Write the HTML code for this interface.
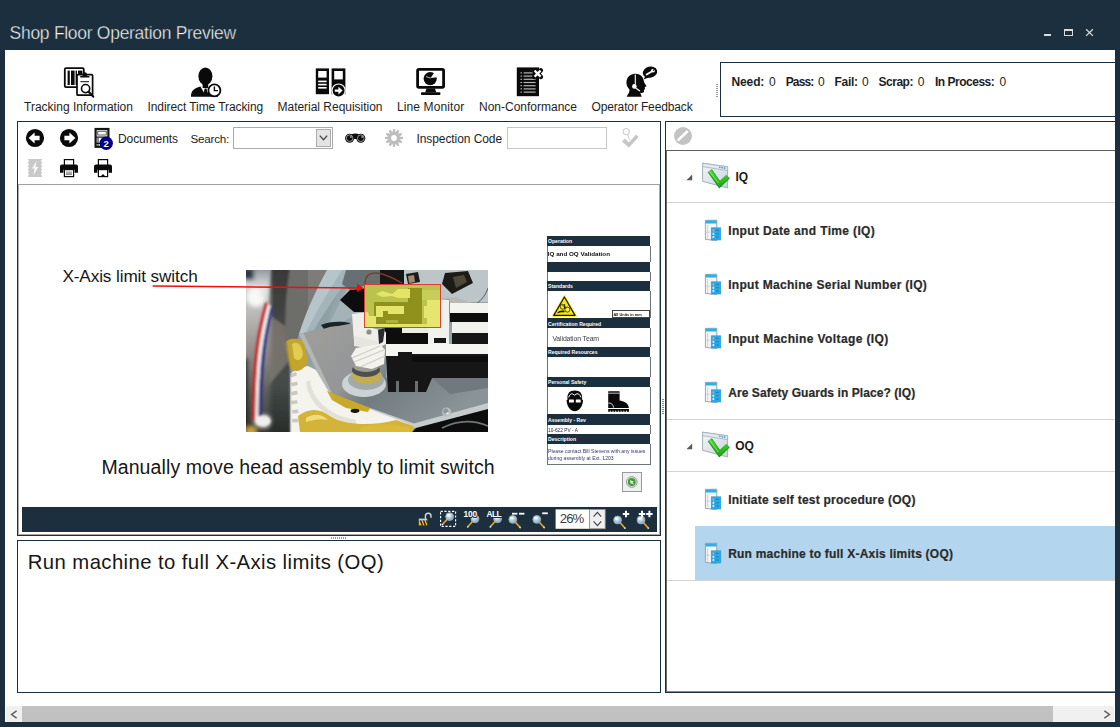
<!DOCTYPE html>
<html><head><meta charset="utf-8"><title>Shop Floor Operation Preview</title>
<style>
*{box-sizing:border-box;margin:0;padding:0}
html,body{width:1120px;height:727px;overflow:hidden;background:#1b2f3e;font-family:"Liberation Sans",sans-serif;color:#1e1e1e}
.a{position:absolute}
.t{position:absolute;white-space:nowrap;line-height:1}
#win{position:absolute;left:5px;top:50px;width:1110px;height:672px;background:#fff;overflow:hidden}
/* coordinates inside #page are page-absolute */
#page{position:absolute;left:0;top:0;width:1120px;height:727px;overflow:hidden}
.navy{background:#1b2f3e}
.lbl{font-size:12px;color:#1e1e1e}
.b{font-weight:700}
</style></head><body>
<div id="page">
<div id="win"></div>
<!-- TITLEBAR -->
<div class="t" style="left:9.6px;top:24.6px;font-size:17.5px;color:#f4f6f8;letter-spacing:-0.29px;-webkit-text-stroke:0.36px #1b2f3e">Shop Floor Operation Preview</div>
<div class="a" style="left:1044px;top:34px;width:7px;height:2px;background:#dcdcdc"></div>
<div class="a" style="left:1064px;top:29px;width:9px;height:7px;border:1px solid #dcdcdc;border-top-width:2px"></div>
<svg class="a" style="left:1085px;top:29px" width="9" height="8" viewBox="0 0 9 8"><path d="M1.1 0.2 L7.9 6.9 M7.9 0.2 L1.1 6.9" stroke="#dcdcdc" stroke-width="1.25" fill="none"/></svg>
<!--TOPTOOLBAR-->
<!-- Tracking Information icon -->
<svg class="a" style="left:62px;top:65px" width="36" height="36" viewBox="62 65 36 36">
 <rect x="64.8" y="68.2" width="19" height="19" rx="1.2" fill="#fff" stroke="#0a0a0a" stroke-width="1.8"/>
 <rect x="67.6" y="70.6" width="2.2" height="14.4" fill="#0a0a0a"/><rect x="71" y="70.6" width="3.6" height="14.4" fill="#0a0a0a"/><rect x="75.6" y="70.6" width="1.4" height="14.4" fill="#0a0a0a"/><rect x="78" y="70.6" width="4.4" height="14.4" fill="#0a0a0a"/>
 <rect x="77" y="74.6" width="15.6" height="20.6" rx="1" fill="#fff" stroke="#0a0a0a" stroke-width="1.7"/>
 <path d="M80.2 77.6 h9.2 v-1.6 h-2.4 v-1.6 a2.2 2.2 0 0 0 -4.4 0 v1.6 h-2.4z" fill="#0a0a0a"/>
 <rect x="80.4" y="81.2" width="8.6" height="1" fill="#0a0a0a"/>
 <circle cx="85.6" cy="88.6" r="4.1" fill="#fff" stroke="#0a0a0a" stroke-width="1.6"/>
 <path d="M88.6 91.8 L93.2 96.6" stroke="#0a0a0a" stroke-width="2.2" stroke-linecap="round"/>
</svg>
<div class="t lbl" style="left:24px;top:100.5px;letter-spacing:0px">Tracking Information</div>
<!-- Indirect Time Tracking -->
<svg class="a" style="left:188px;top:65px" width="36" height="36" viewBox="188 65 36 36">
 <ellipse cx="205.4" cy="76.2" rx="7" ry="8.8" fill="#0a0a0a"/><rect x="202.6" y="82" width="5.6" height="6" fill="#0a0a0a"/>
 <path d="M191 96.8 C191 90 194 88.6 200.4 86.4 L205.6 95.4 L210.8 86.4 C214 87.4 216 88 218 89.6 L218 96.8 Z" fill="#0a0a0a"/>
 <path d="M204.6 88.4 h2 l0.9 5 l-1.9 3.2 l-1.9 -3.2z" fill="#0a0a0a"/>
 <circle cx="214.4" cy="90.4" r="6" fill="#fff" stroke="#0a0a0a" stroke-width="1.8"/>
 <path d="M214.4 86.4 V90.6 H218" stroke="#0a0a0a" stroke-width="1.4" fill="none"/>
</svg>
<div class="t lbl" style="left:147.5px;top:100.5px;letter-spacing:-0.08px">Indirect Time Tracking</div>
<!-- Material Requisition -->
<svg class="a" style="left:313px;top:65px" width="36" height="36" viewBox="313 65 36 36">
 <rect x="315.8" y="68.4" width="13.2" height="25.8" fill="#0a0a0a"/>
 <rect x="331.6" y="68.4" width="13.8" height="25.8" fill="#0a0a0a"/>
 <rect x="318.2" y="71" width="8.4" height="6.6" fill="#fff"/>
 <rect x="334.2" y="71" width="8.6" height="8.4" fill="#fff"/>
 <rect x="318.2" y="80.6" width="8.4" height="1.6" fill="#fff"/><rect x="318.2" y="83.8" width="8.4" height="1.6" fill="#fff"/><rect x="318.2" y="87" width="8.4" height="1.6" fill="#fff"/>
 <circle cx="338.6" cy="90.6" r="6.6" fill="#0a0a0a" stroke="#fff" stroke-width="1.2"/>
 <path d="M334.8 89.4 h3.6 v-2.6 l4.2 3.8 l-4.2 3.8 v-2.6 h-3.6z" fill="#fff"/>
</svg>
<div class="t lbl" style="left:277.5px;top:100.5px;letter-spacing:-0.02px">Material Requisition</div>
<!-- Line Monitor -->
<svg class="a" style="left:412px;top:65px" width="36" height="36" viewBox="412 65 36 36">
 <rect x="417.6" y="69.4" width="26" height="18" rx="1.4" fill="#fff" stroke="#0a0a0a" stroke-width="2.8"/>
 <path d="M426.4 88.6 h8.6 l1.2 4 h-11z" fill="#0a0a0a"/>
 <rect x="421" y="92.2" width="19.4" height="2.8" rx="0.8" fill="#0a0a0a"/>
 <circle cx="430.2" cy="78.6" r="6.6" fill="#0a0a0a"/>
 <path d="M430.6 78 L434.4 72.6 A7 7 0 0 1 437.2 77.2 Z" fill="#fff"/>
 <path d="M426 76.6 L430.6 78" stroke="#fff" stroke-width="0.7"/>
</svg>
<div class="t lbl" style="left:397px;top:100.5px;letter-spacing:0.12px">Line Monitor</div>
<!-- Non-Conformance -->
<svg class="a" style="left:512px;top:63px" width="36" height="36" viewBox="512 63 36 36">
 <rect x="516.8" y="67.4" width="22.2" height="28.8" fill="#0a0a0a"/>
 <g fill="#b4b4b4"><rect x="523.6" y="72.3" width="9" height="1.2"/><rect x="523.6" y="75.5" width="9" height="1.2"/><rect x="523.6" y="78.7" width="12" height="1.2"/><rect x="523.6" y="81.9" width="12" height="1.2"/><rect x="523.6" y="85.1" width="12" height="1.2"/><rect x="523.6" y="88.3" width="12" height="1.2"/><rect x="523.6" y="91.5" width="12" height="1.2"/></g>
 <g fill="#fff"><rect x="520.6" y="72.4" width="1.2" height="1"/><rect x="520.6" y="75.6" width="1.2" height="1"/><rect x="520.6" y="78.8" width="1.2" height="1"/><rect x="520.6" y="82" width="1.2" height="1"/><rect x="520.6" y="85.2" width="1.2" height="1"/><rect x="520.6" y="88.4" width="1.2" height="1"/><rect x="520.6" y="91.6" width="1.2" height="1"/></g>
 <path d="M534.4 70.4 L540.8 76.8 M540.8 70.4 L534.4 76.8" stroke="#0a0a0a" stroke-width="4.6" stroke-linecap="round"/>
 <path d="M534.6 70.6 L540.6 76.6 M540.6 70.6 L534.6 76.6" stroke="#fff" stroke-width="2.2" stroke-linecap="butt"/>
</svg>
<div class="t lbl" style="left:479px;top:100.5px;letter-spacing:0px">Non-Conformance</div>
<!-- Operator Feedback -->
<svg class="a" style="left:622px;top:63px" width="38" height="38" viewBox="622 63 38 38">
 <path d="M626.6 96.8 C628.4 93.4 630 91.6 629.4 89.4 C625.4 85.8 625.4 78.6 629.8 75.6 C634.2 72.6 640.6 73.6 642.8 77.8 C643.8 79.8 643.8 81.4 644.2 82.6 L646.6 86.2 L644.8 87 L645 89.2 L643.8 90 L644 91.6 C643.8 93 642 93.2 640.2 92.8 L641.8 96.8 Z" fill="#0a0a0a"/>
 <path d="M635.3 74.6 V84.6" stroke="#fff" stroke-width="1.1"/>
 <circle cx="634.4" cy="86.4" r="2.3" fill="#fff"/>
 <path d="M635.6 88 L640 91" stroke="#fff" stroke-width="1.1"/>
 <ellipse cx="650" cy="72.2" rx="7.3" ry="5.5" fill="#0a0a0a" transform="rotate(-14 650 72.2)"/>
 <path d="M643.6 79.6 L645.6 75.4 L648.8 77.4 Z" fill="#0a0a0a"/>
 <path d="M646.6 74.6 L652.2 71.2" stroke="#fff" stroke-width="1.7" stroke-linecap="round"/>
 <circle cx="653" cy="70.6" r="1.9" fill="#fff"/><path d="M653 70.6 L655.6 68.6" stroke="#0a0a0a" stroke-width="1.3"/>
</svg>
<div class="t lbl" style="left:591.5px;top:100.5px;letter-spacing:-0.14px">Operator Feedback</div>
<!-- splitter grip -->
<div class="a" style="left:716px;top:83px;width:2px;height:15px;background:repeating-linear-gradient(#fff 0 1px,#9a9a9a 1px 2px)"></div>
<!-- Stats box -->
<div class="a" style="left:720px;top:62px;width:410px;height:55px;border:1px solid #1b2f3e;background:#fff"></div>
<div class="t b" style="left:731.4px;top:75.5px;font-size:12px;letter-spacing:-0.09px">Need:</div><div class="t" style="left:769.1px;top:75.5px;font-size:12px;letter-spacing:0px">0</div><div class="t b" style="left:785.7px;top:75.5px;font-size:12px;letter-spacing:-0.87px">Pass:</div><div class="t" style="left:818px;top:75.5px;font-size:12px;letter-spacing:0px">0</div><div class="t b" style="left:834.6px;top:75.5px;font-size:12px;letter-spacing:-0.31px">Fail:</div><div class="t" style="left:862px;top:75.5px;font-size:12px;letter-spacing:0px">0</div><div class="t b" style="left:878.6px;top:75.5px;font-size:12px;letter-spacing:-0.51px">Scrap:</div><div class="t" style="left:917.7px;top:75.5px;font-size:12px;letter-spacing:0px">0</div><div class="t b" style="left:934.9px;top:75.5px;font-size:12px;letter-spacing:-0.48px">In Process:</div><div class="t" style="left:999.4px;top:75.5px;font-size:12px;letter-spacing:0px">0</div>
<!--/TOPTOOLBAR-->
<!--STATS-->
<!--LEFTPANEL-->
<!-- left panel frame -->
<div class="a" style="left:17px;top:121px;width:644px;height:415px;border:1px solid #1b2f3e;background:#fff"></div>
<div class="a" style="left:18px;top:184px;width:642px;height:351px;border:1px solid #a9a9a9;border-top-color:#a0a0a0;background:#fff"></div>
<!-- back / forward -->
<svg class="a" style="left:25px;top:128px" width="20" height="20" viewBox="0 0 20 20"><circle cx="10" cy="10" r="9.1" fill="#0a0a0a"/><path d="M3.6 10 L9.6 4.6 V7.8 H14.6 V12.2 H9.6 V15.4 Z" fill="#fff"/></svg>
<svg class="a" style="left:59px;top:128px" width="20" height="20" viewBox="0 0 20 20"><circle cx="10" cy="10" r="9.1" fill="#0a0a0a"/><path d="M16.4 10 L10.4 4.6 V7.8 H5.4 V12.2 H10.4 V15.4 Z" fill="#fff"/></svg>
<!-- documents icon -->
<svg class="a" style="left:93px;top:126px" width="24" height="26" viewBox="93 126 24 26">
 <rect x="95.6" y="129" width="12.8" height="17.8" fill="#fff" stroke="#141414" stroke-width="2.2"/>
 <rect x="97.8" y="131.2" width="8.4" height="3.8" fill="#fff" stroke="#141414" stroke-width="0.7"/>
 <path d="M96 137.2 H108 M96 143.4 H102" stroke="#141414" stroke-width="1.2"/>
 <path d="M98 138 V146" stroke="#141414" stroke-width="1"/>
 <circle cx="106.2" cy="143.3" r="6.7" fill="#00008b"/>
</svg>
<div class="t b" style="left:103.4px;top:138.8px;font-size:9.5px;color:#fff">2</div>
<div class="t lbl" style="left:118px;top:132.6px;letter-spacing:-0.08px">Documents</div>
<div class="t lbl" style="left:190.4px;top:133.3px;letter-spacing:-0.22px;font-size:11.7px">Search:</div>
<!-- combo -->
<div class="a" style="left:233px;top:127px;width:100px;height:22px;border:1px solid #ababab;background:#fff"></div>
<div class="a" style="left:316px;top:129px;width:15px;height:18px;border:1px solid #adadad;background:#e4e4e4"></div>
<svg class="a" style="left:318px;top:133px" width="11" height="10" viewBox="0 0 11 10"><path d="M1.8 2.6 L5.5 6.8 L9.2 2.6" stroke="#444" stroke-width="1.3" fill="none"/></svg>
<!-- binoculars -->
<svg class="a" style="left:344px;top:131px" width="23" height="14" viewBox="344 131 23 14">
 <path d="M351 134.4 Q355.2 132.6 359.4 134.4 L359.4 139 H351Z" fill="#0c0c0c"/>
 <circle cx="349.6" cy="138.2" r="4.5" fill="#0c0c0c"/><circle cx="360.8" cy="138.2" r="4.5" fill="#0c0c0c"/>
 <circle cx="349.6" cy="138.2" r="3.3" fill="none" stroke="#fff" stroke-width="0.55"/><circle cx="360.8" cy="138.2" r="3.3" fill="none" stroke="#fff" stroke-width="0.55"/>
 <circle cx="350.9" cy="137" r="0.8" fill="#fff"/><circle cx="362.1" cy="137" r="0.8" fill="#fff"/>
</svg>
<!-- gear (disabled) -->
<svg class="a" style="left:384.1px;top:128.1px" width="20" height="20" viewBox="-10 -10 20 20">
 <g fill="#bdbdbd"><circle r="5.9"/>
 <g id="gt"><path d="M-0.9 -9 h1.8 l.7 4 h-3.2z M-0.9 9 h1.8 l.7 -4 h-3.2z"/></g>
 <use href="#gt" transform="rotate(30)"/><use href="#gt" transform="rotate(60)"/><use href="#gt" transform="rotate(90)"/><use href="#gt" transform="rotate(120)"/><use href="#gt" transform="rotate(150)"/></g>
 <circle r="2.9" fill="#fff"/>
</svg>
<div class="t lbl" style="left:416.4px;top:132.6px;letter-spacing:-0.07px">Inspection Code</div>
<div class="a" style="left:507px;top:127px;width:100px;height:22px;border:1px solid #c6c6c6;background:#fff"></div>
<!-- check/key disabled icon -->
<svg class="a" style="left:620px;top:126px" width="22" height="24" viewBox="620 126 22 24">
 <circle cx="626.2" cy="131.6" r="3.1" fill="#fff" stroke="#cdcdcd" stroke-width="1.1"/>
 <path d="M627.6 134.6 L629.6 139.6" stroke="#cdcdcd" stroke-width="1"/>
 <path d="M622 141.4 L624.7 138.5 L628.9 142.4 L636 134.4 L638.7 137 L628.9 147.5 Z" fill="#c6c6c6"/>
</svg>
<!-- row 2: flash (disabled), printers -->
<svg class="a" style="left:26px;top:157px" width="18" height="22" viewBox="26 157 18 22">
 <rect x="28" y="159" width="14" height="18" fill="#c9c9c9"/>
 <g fill="#fff"><circle cx="28" cy="161" r="1"/><circle cx="28" cy="164.4" r="1"/><circle cx="28" cy="167.8" r="1"/><circle cx="28" cy="171.2" r="1"/><circle cx="28" cy="174.6" r="1"/>
 <circle cx="42" cy="161" r="1"/><circle cx="42" cy="164.4" r="1"/><circle cx="42" cy="167.8" r="1"/><circle cx="42" cy="171.2" r="1"/><circle cx="42" cy="174.6" r="1"/></g>
 <path d="M36.6 161 L32 168.4 H34.8 L33.4 175.2 L38.2 167 H35.4 Z" fill="#fff"/>
</svg>
<svg class="a" style="left:59px;top:157px" width="20" height="21" viewBox="0 0 20 21">
 <rect x="5.4" y="2.6" width="9.2" height="6" fill="#fff" stroke="#0a0a0a" stroke-width="1.2"/>
 <path d="M1 9.4 a2 2 0 0 1 2 -2 h14 a2 2 0 0 1 2 2 v6.4 h-3.4 v-3 h-11.2 v3 h-3.4z" fill="#0a0a0a"/>
 <rect x="5.4" y="12.6" width="9.2" height="7" fill="#fff" stroke="#0a0a0a" stroke-width="1.2"/>
 <rect x="7" y="14.6" width="6" height="3.4" fill="#8a8a8a"/><rect x="7" y="15.6" width="6" height="0.8" fill="#e0e0e0"/>
</svg>
<svg class="a" style="left:93px;top:157px" width="20" height="21" viewBox="0 0 20 21">
 <rect x="5.4" y="2.6" width="9.2" height="6" fill="#fff" stroke="#0a0a0a" stroke-width="1.2"/>
 <path d="M1 9.4 a2 2 0 0 1 2 -2 h14 a2 2 0 0 1 2 2 v6.4 h-3.4 v-3 h-11.2 v3 h-3.4z" fill="#0a0a0a"/>
 <rect x="5.4" y="12.6" width="9.2" height="7" fill="#fff" stroke="#0a0a0a" stroke-width="1.2"/>
 <path d="M8 19 l2 -2 l2 2z" fill="#0a0a0a"/>
</svg>
<!--SLIDE-->
<div class="t" style="left:62.4px;top:268px;font-size:17.2px;letter-spacing:-0.12px;color:#161616">X-Axis limit switch</div>
<div class="t" style="left:101.4px;top:458.4px;font-size:19.5px;letter-spacing:0.1px;color:#161616">Manually move head assembly to limit switch</div>
<!--PHOTO-->
<svg class="a" style="left:246px;top:270px" width="242" height="162" viewBox="0 0 242 162">
<defs>
 <filter id="b1" x="-5%" y="-5%" width="110%" height="110%"><feGaussianBlur stdDeviation="0.75"/></filter>
 <filter id="b2" x="-30%" y="-30%" width="160%" height="160%"><feGaussianBlur stdDeviation="2"/></filter>
 <filter id="b3" x="-20%" y="-20%" width="140%" height="140%"><feGaussianBlur stdDeviation="1.3"/></filter>
 <linearGradient id="pl" x1="0" y1="0" x2="1" y2=".6"><stop offset="0" stop-color="#a09f9c"/><stop offset=".45" stop-color="#939597"/><stop offset=".6" stop-color="#727b7f"/><stop offset="1" stop-color="#8a9397"/></linearGradient>
 <linearGradient id="lf" x1="0" y1="0" x2="0" y2="1"><stop offset="0" stop-color="#7c838a"/><stop offset=".12" stop-color="#d4d6d6"/><stop offset=".32" stop-color="#b4b2b0"/><stop offset=".55" stop-color="#8a8480"/><stop offset=".75" stop-color="#5a5b57"/><stop offset="1" stop-color="#35382f"/></linearGradient>
 <linearGradient id="dk" x1="0" y1="0" x2="0" y2="1"><stop offset="0" stop-color="#383838"/><stop offset=".45" stop-color="#4a4a48"/><stop offset=".7" stop-color="#454b48"/><stop offset="1" stop-color="#262a28"/></linearGradient>
 <clipPath id="pc"><rect width="242" height="162"/></clipPath>
</defs>
<g clip-path="url(#pc)">
<rect width="242" height="162" fill="#8fa0a5"/>
<g filter="url(#b1)">
 <!-- ring interior bluish -->
 <path d="M100 0 H242 V110 H60 Z" fill="#93a5aa"/>
 <path d="M110 0 H160 L120 40 L80 60Z" fill="#a3b3b7"/>
 <!-- disc (mid grey) -->
 <path d="M30 0 H84 C72 20 62 42 53 64 L40 110 H30Z" fill="#6d6d6b"/>
 <path d="M62 0 H84 C76 14 68 28 62 44 C62 30 62 14 62 0Z" fill="#7b7b79"/>
 <!-- silver ring outer -->
 <path d="M81 0 H102 C88 20 74 42 62 62 L53 64 C60 42 70 20 81 0Z" fill="#b6c5c9"/>
 <path d="M96 0 H108 C94 20 78 42 68 60 L60 62 C70 42 82 22 96 0Z" fill="#a3b5ba"/>
 <!-- top right light area -->
 <path d="M146 0 H242 V32 H196 L150 16Z" fill="#bcc6c8"/>
 <path d="M199 3 L222 1 L227 13 L206 24 L196 14Z" fill="#1e1c18"/>
 <path d="M207 7 L218 5 L221 12 L210 18Z" fill="#4e4a38"/>
 <!-- top black block behind switch -->
 <path d="M134 0 H158 V14 H134Z" fill="#141414"/>
 <path d="M160 4 L172 2 L174 12 L162 14Z" fill="#1a1a1a"/>
 <path d="M162 6 L168 5 L169 12 L163 13Z" fill="#a88a68"/>
 <!-- dark cutouts in ring -->
 <path d="M100 0 H134 V16 H118 L104 20 L96 14Z" fill="#667072"/><path d="M94 30 L104 20 L118 18.6 L121 33 L121 42 L108 42Z" fill="#0b0b0b"/>
 <path d="M75 55 C84 51 96 51 104 53 L104 57 C96 55 84 56 78 59Z" fill="#1c2426"/>
 <!-- brown wire -->
 <path d="M119 16 C118 4 126 1 136 4 C144 6 150 10 156 13" stroke="#7a3e26" stroke-width="1.5" fill="none"/>
 <!-- switch body (under highlight) -->
 <rect x="118" y="14" width="77" height="44" fill="#8b9a9a"/>
 <path d="M128 32 H176 V54 H128Z" fill="#1b1b1b"/>
 <path d="M162 18 H176 V34 H162Z" fill="#1b1b1b"/>
 <path d="M176 20 H194 V30 H176Z" fill="#a9b4b4"/>
 <path d="M130 36 H158 V44 H142 V41 H137 V47 H130Z" fill="#efefe8"/>
 <path d="M178 36 H194 V48 H178Z" fill="#f2f2ea"/>
 <path d="M190 30 H195 V58 H190Z" fill="#f4f4ee"/>
 <path d="M118 46 H130 V58 H118Z" fill="#f0f0ea"/>
 <path d="M130 54 H195 V58 H130Z" fill="#ecece4"/>
 <path d="M130 24 L136 21 L146 24 L152 19 H164 V28 H152 L146 26 L136 27Z" fill="#eeeedc"/>
 <path d="M140 50 H152 V53 H140Z" fill="#6b6b6b"/>
 <!-- spring contact right of highlight -->
 <path d="M196 28 L210 27 L226 33 L230 38 L224 38 L210 34 L198 36Z" fill="#b9b9b3"/>
 <path d="M199 30 L203 29 L212 68 L209 69Z" fill="#8c8c86"/>
 <path d="M230 34 C236 30 240 24 242 18" stroke="#3a4450" stroke-width="0.8" fill="none"/>
 <!-- white/black rails right -->
 <rect x="204" y="33" width="38" height="10" fill="#f3f3ef"/>
 <rect x="204" y="43" width="38" height="9" fill="#101010"/>
 <rect x="206" y="52" width="36" height="11" fill="#f1f1ed"/>
 <rect x="206" y="63" width="36" height="11" fill="#121212"/>
 <rect x="181" y="30" width="22" height="46" fill="#f1f1ed"/>
 <rect x="156" y="58" width="26" height="5" fill="#ecece6"/>
 <rect x="139" y="58" width="17" height="17" fill="#111"/><rect x="156" y="63" width="26" height="12" fill="#111"/>
 <rect x="188" y="68" width="12" height="5" fill="#151515"/>
 <!-- metal plate -->
 <path d="M52.8 63.8 L104 53.8 L140 70 L140 108 L242 108 V133 L168 153.6 L124 138 L81.5 122.5 Z" fill="url(#pl)"/>
 <path d="M186 108 H242 V118 L204 124 Z" fill="#6f797d"/>
 <path d="M124 138 L168 153.6 L242 133 V139.4 L170 158 L122 141Z" fill="#c6cccd"/>
 <path d="M52.8 63.8 L57.4 63 L86 123 L81.5 122.5Z" fill="#b4b6b5"/>
 <circle cx="200.6" cy="142" r="4.6" fill="#b7bec0"/><circle cx="199.8" cy="141" r="2.6" fill="#8e979a"/><circle cx="201.6" cy="143.4" r="1.2" fill="#e8ecec"/>
 <!-- long white strip -->
 <path d="M140 74 H242 V84 H166 V82 H152 V86 H140Z" fill="#f5f5f1"/>
 <!-- big black block -->
 <path d="M152 82 H166 V84 H242 V108 H186 L180 122 H142 L140 86 H152Z" fill="#121212"/>
 <path d="M166 86 H242 V92 H166Z" fill="#090909"/>
 <path d="M150 111 h3 v11 h-3z M169 111 h3 v11 h-3z" fill="#6a7072"/>
 <!-- white clip + screw at left of switch bottom -->
 <path d="M106 44 L122 42 L126 58 L140 62 L140 74 L128 80 L108 72Z" fill="#efefe9"/>
 <path d="M108 66 L136 72 L134 80 L108 76Z" fill="#e6e6df"/>
 <circle cx="123" cy="62" r="2.6" fill="#8d8d88"/>
 <path d="M132 60 L139 58 L137 72 L133 74Z" fill="#2a2a2a"/>
 <!-- bottom right black -->
 <path d="M170 158 L242 139 V162 H166Z" fill="#0e0e0e"/>
 <path d="M196 158 C212 150 228 150 242 156" stroke="#6f7578" stroke-width="1.6" fill="none"/>
 <!-- white big gear -->
 <path d="M44 104 L52 98 L62 96 L70 100 L84 124 L126 140 L168 156 L166 162 H44Z" fill="#f4f3ed"/>
 <path d="M44 104 l6 -2 l1 3.6 l-6 2z M45 113 l6 -1.6 l1 3.6 l-6 1.6z M45 122 l6 -1.4 l1 3.6 l-6 1.4z M45 131 l6 -1 l.8 3.6 l-6 1z M46 140 l6 -.6 l.6 3.6 l-6 .8z M46 149 l6 -.4 l.4 3.6 l-6 .4z" fill="#c9c9c0"/>
 <path d="M64 110 C66 130 84 146 110 150 L110 154 C82 150 62 134 60 112Z" fill="#e2e1d8"/>
 <!-- grease -->
 <path d="M38 74 C42 66 56 68 58 74 L62 90 C60 98 54 103 46 100 C40 96 37 84 38 74Z" fill="#c2a52a"/>
 <path d="M46 74 C52 70 56 76 57 84 C56 90 52 92 48 88Z" fill="#e1cb52"/>
 <path d="M81 121 L96 127 L124 138 L122 142 L100 138 L86 130Z" fill="#caa92b"/>
 <path d="M52 146 C62 138 74 138 84 146 C100 156 128 156 150 150 L168 156 L166 162 H54Z" fill="#d3b437"/>
 <path d="M60 148 C68 143 76 144 82 150 C74 148 66 150 60 152Z" fill="#f0dc78"/>
 <path d="M114 158 C130 152 150 154 164 158 L164 162 H114Z" fill="#dcba38"/>
 <ellipse cx="109" cy="140.8" rx="4.4" ry="2.1" fill="#15130c"/>
 <!-- bushing / shaft -->
 <ellipse cx="118" cy="114" rx="22" ry="13" fill="#ccd3d5"/>
 <ellipse cx="120" cy="110" rx="18" ry="10" fill="#a2a9ab"/>
 <ellipse cx="121" cy="106" rx="15" ry="8" fill="#c2ad55"/>
 <ellipse cx="120" cy="100" rx="14" ry="7" fill="#4f4f4c"/>
 <ellipse cx="120" cy="96" rx="13" ry="6" fill="#9c9c98"/>
 <!-- worm gear -->
 <path d="M105 86 L110 78 L134 74 L139 80 L138 94 L126 99 L110 96Z" fill="#f3f2ec"/>
 <path d="M106 88 L134 76 M108 92 L138 80 M114 97 L139 86" stroke="#cfcec6" stroke-width="1.3"/>
</g>
<!-- dark vertical band (blurred) -->
<g filter="url(#b3)">
 <path d="M25 -4 H44 C40 20 38 50 40 74 L44 100 L44 166 H16 L20 60Z" fill="url(#dk)"/>
 <path d="M22 44 L39 56 L42 92 L22 116Z" fill="#7e7872" opacity=".85"/>
</g>
<!-- blurred far-left strip -->
<g filter="url(#b2)">
 <rect x="-6" y="-6" width="30" height="176" fill="url(#lf)"/>
 <ellipse cx="10" cy="27" rx="9.5" ry="10" fill="#f8f8f6"/>
 <ellipse cx="18" cy="22" rx="4" ry="6" fill="#e6e6e4"/>
 <ellipse cx="17" cy="151" rx="8" ry="5.6" fill="#ecece9"/>
 <rect x="-6" y="-2" width="14" height="12" fill="#2a3646"/>
 <rect x="-5" y="88" width="7" height="74" fill="#1c1d19"/>
 <rect x="0" y="157" width="10" height="8" fill="#c9a63a"/>
</g>
<g filter="url(#b3)">
 <path d="M20.6 33 C13 60 8 84 7.4 150" stroke="#cc2a2e" stroke-width="3.3" fill="none"/>
 <path d="M23.4 35 C16.4 62 11.2 86 10.8 150" stroke="#f3f1f1" stroke-width="3" fill="none"/>
 <path d="M26 37 C19.6 64 14.8 88 14.4 146" stroke="#2b3688" stroke-width="3" fill="none"/>
 <ellipse cx="17" cy="151" rx="7.4" ry="5" fill="#efefec"/>
</g>
</g>
</svg>
<!--/PHOTO-->
<!-- highlight + arrow -->
<div class="a" style="left:364px;top:284px;width:77px;height:44px;background:rgba(222,222,28,.6);border:1px solid rgba(215,40,48,.85)"></div>
<svg class="a" style="left:150px;top:280px" width="220" height="16" viewBox="150 280 220 16"><path d="M152.6 286 L358 287.9" stroke="#f40d0d" stroke-width="1.5" fill="none"/><path d="M363.4 288 L357 283.6 L357 292.3 Z" fill="#f80808"/></svg>
<!-- side info panel of slide -->
<div class="a" style="left:547px;top:236px;width:103px;height:229px;background:#fff"></div>
<style>
.sh{position:absolute;left:547px;width:103px;background:#1b2f3e;color:#fff;font-weight:700;font-size:5.1px;line-height:1;white-space:nowrap;padding-left:1px;overflow:hidden}
.sw{position:absolute;left:547px;width:103.5px;background:#fff;border-left:1px solid #6b757e;border-right:1px solid #6b757e}
.st{position:absolute;white-space:nowrap;line-height:1;filter:blur(0.25px)}
</style>
<div class="sh" style="top:236px;height:10px;padding-top:2.8px">Operation</div>
<div class="sw" style="top:246px;height:16.4px"></div>
<div class="st b" style="left:547.8px;top:250.7px;font-size:6.25px;color:#0c0c14">IQ and OQ Validation</div>
<div class="sh" style="top:262.4px;height:9.4px"></div>
<div class="sw" style="top:271.8px;height:9px"></div>
<div class="sh" style="top:280.8px;height:10px;padding-top:2.8px">Standards</div>
<div class="sw" style="top:290.8px;height:27.6px"></div>
<svg class="a" style="left:549px;top:292px" width="31" height="27" viewBox="549 292 31 27">
 <path d="M564.4 295.4 L576.6 316.2 H552.2 Z" fill="#f6e71a" stroke="#f6e71a" stroke-width="1" stroke-linejoin="round"/>
 <path d="M564.4 297 L575 315.4 H553.8 Z" fill="#f6e71a" stroke="#14140a" stroke-width="1.2" stroke-linejoin="round"/>
 <circle cx="562.6" cy="306.8" r="2.4" fill="none" stroke="#2a2a08" stroke-width="0.8"/><circle cx="567.4" cy="309.6" r="2.5" fill="#f8ee50" stroke="#2a2a08" stroke-width="0.8"/>
 <path d="M564.6 304 v5 M562.4 305.6 l4.4 2.4" stroke="#2a2a08" stroke-width="0.8"/>
 <path d="M557.4 312.6 C559 310.6 561.6 310 564.6 310.8 L564.2 312.6 C562 311.8 559.6 312.2 557.8 313.4 Z" fill="#14140a"/>
</svg>
<div class="a" style="left:611.6px;top:310.4px;width:38.6px;height:8px;border:0.8px solid #444;background:#fff"></div>
<div class="st b" style="left:613.4px;top:312.6px;font-size:3.9px;color:#111">All Units in mm</div>
<div class="sh" style="top:318.4px;height:9.8px;padding-top:3.2px">Certification Required</div>
<div class="sw" style="top:328.2px;height:19px"></div>
<div class="st" style="left:552.4px;top:336.2px;font-size:6.9px;letter-spacing:-0.12px;color:#3c3c44">Validation Team</div>
<div class="sh" style="top:347.2px;height:10px;padding-top:2.8px">Required Resources</div>
<div class="sw" style="top:357.2px;height:19.8px"></div>
<div class="sh" style="top:377px;height:9.8px;padding-top:2.8px">Personal Safety</div>
<div class="sw" style="top:386.8px;height:27.6px"></div>
<!-- face w/ goggles -->
<svg class="a" style="left:565px;top:389px" width="20" height="24" viewBox="565 389 20 24">
 <path d="M567.6 399.6 C566.6 393.6 569.6 390.4 574.8 390.4 C580 390.4 583 393.6 582 399.6 L583 400 C583 406 579.4 411.2 574.8 411.2 C570.2 411.2 566.6 406 566.6 400 Z" fill="#0a0a0a"/>
 <path d="M568.6 397.4 C569.4 395 571 393.4 572.4 393.8 L574.6 395.2 L576.8 393.8 C578.6 393.4 580.2 395 581 397.4" stroke="#fff" stroke-width="1" fill="none"/>
 <rect x="569" y="399.5" width="4.9" height="2.9" rx="0.5" fill="#fff"/><rect x="575.8" y="399.5" width="4.9" height="2.9" rx="0.5" fill="#fff"/>
</svg>
<!-- boot -->
<svg class="a" style="left:606px;top:390px" width="24" height="23" viewBox="606 390 24 23">
 <path d="M608.2 391.2 H619.6 V400.4 C623.4 401 628.2 402.6 628.8 407.2 V408 H608.2 Z" fill="#0a0a0a"/>
 <path d="M608.2 393.2 H619.6" stroke="#d8d8d8" stroke-width="0.9"/>
 <path d="M608.4 403.2 C611 402.6 613.2 404.6 613.6 407.6" stroke="#fff" stroke-width="0.9" fill="none"/>
 <path d="M608.2 409 H629 V411.8 H608.2 Z" fill="#0a0a0a"/>
 <path d="M610.3 410.6 v1.6 M613 410.6 v1.6 M615.7 410.6 v1.6 M618.4 410.6 v1.6 M621.1 410.6 v1.6 M623.8 410.6 v1.6 M626.5 410.6 v1.6" stroke="#fff" stroke-width="0.8"/>
</svg>
<div class="sh" style="top:414.4px;height:10.4px;padding-top:3.6px">Assembly - Rev</div>
<div class="sw" style="top:424.8px;height:9.6px"></div>
<div class="st" style="left:548px;top:428.9px;font-size:4.8px;color:#2a2a3a">10-622 PV - A</div>
<div class="sh" style="top:434.4px;height:9.6px;padding-top:2.6px">Description</div>
<div class="sw" style="top:444px;height:21px;border-bottom:1px solid #6b757e"></div>
<div class="st" style="left:548px;top:447.8px;font-size:5.1px;color:#30346a;line-height:7px">Please contact Bill Stevens with any issues<br>during assembly at Ext. 1203</div>
<!-- small button -->
<div class="a" style="left:622px;top:472px;width:20px;height:20px;border:1px solid #9a9a9a;background:#efefef"></div>
<svg class="a" style="left:625px;top:475px" width="14" height="14" viewBox="0 0 14 14"><circle cx="6.8" cy="7" r="5.3" fill="#e4e8e4" stroke="#929a92" stroke-width="1"/><circle cx="6.8" cy="7" r="3.9" fill="#37a037"/><path d="M5 5.2 L8.8 6.4 L7.4 7.4 L8.8 9 L8.2 9.6 L6.8 8 L5.9 9.2Z" fill="#fff"/></svg>
<!--/SLIDE-->
<!-- viewer bottom toolbar -->
<div class="a navy" style="left:22px;top:507px;width:635px;height:25px"></div>
<!--VIEWERTOOLS-->
<svg class="a" style="left:410px;top:507px" width="247" height="25" viewBox="410 507 247 25">
<defs>
 <radialGradient id="lens" cx=".4" cy=".35" r=".7"><stop offset="0" stop-color="#e8f4fc"/><stop offset=".6" stop-color="#9cc4e6"/><stop offset="1" stop-color="#6e9cc8"/></radialGradient>
 <g id="mgl"><path d="M-2.6 2.8 L-7.4 8.2" stroke="#4a3410" stroke-width="2.5" stroke-linecap="round"/><path d="M-2.6 2.8 L-7.4 8.2" stroke="#d9a84a" stroke-width="1.5" stroke-linecap="round"/><circle cx="-7.2" cy="8" r=".8" fill="#d6ecf8"/><circle r="3.9" fill="url(#lens)" stroke="#b5ae9e" stroke-width="0.9"/><ellipse cx="-1" cy="-1.4" rx="2" ry="1.1" fill="#fff" opacity=".75"/></g>
 <g id="mgr"><path d="M2.6 2.8 L7.4 8.2" stroke="#4a3410" stroke-width="2.5" stroke-linecap="round"/><path d="M2.6 2.8 L7.4 8.2" stroke="#d9a84a" stroke-width="1.5" stroke-linecap="round"/><circle cx="7.2" cy="8" r=".8" fill="#d6ecf8"/><circle r="3.9" fill="url(#lens)" stroke="#b5ae9e" stroke-width="0.9"/><ellipse cx="-1" cy="-1.4" rx="2" ry="1.1" fill="#fff" opacity=".75"/></g>
</defs>
<!-- lock -->
<path d="M425.4 518.8 V516 a2.8 2.8 0 0 1 5.6 0 V517.8" stroke="#d4d8da" stroke-width="1.4" fill="none"/>
<rect x="418.8" y="518.6" width="8.4" height="2.2" fill="#c3d3e3"/>
<rect x="418.8" y="520.6" width="8.4" height="4.8" fill="#f4b71c"/>
<path d="M419.8 520.6 l1.8 4.8 h1.5 l-1.8 -4.8z M422.8 520.6 l1.8 4.8 h1.5 l-1.8 -4.8z M425.8 520.6 l1.4 3.6 v-3.6z" fill="#1a1a1a"/>
<!-- dashed zoom box -->
<rect x="440.6" y="511.4" width="15" height="15" fill="none" stroke="#fff" stroke-width="1.1" stroke-dasharray="2.2 1.6"/>
<use href="#mgl" x="449.6" y="516.6"/>
<use href="#mgl" x="475" y="518.8"/>
<use href="#mgl" x="497.6" y="518.8"/>
<use href="#mgr" x="512.8" y="519.4"/>
<use href="#mgr" x="536.8" y="519.4"/>
<rect x="512" y="512.8" width="5.4" height="1.8" fill="#fff"/><rect x="519" y="512.8" width="5.4" height="1.8" fill="#fff"/>
<rect x="542.2" y="512.4" width="5.6" height="1.8" fill="#fff"/>
<use href="#mgr" x="617.6" y="520"/>
<use href="#mgr" x="641" y="520"/>
<path d="M626 510.8 v6.4 M622.8 514 h6.4" stroke="#fff" stroke-width="2"/>
<path d="M642 510.8 v6.4 M638.8 514 h6.4 M649.4 510.8 v6.4 M646.2 514 h6.4" stroke="#fff" stroke-width="2"/>
<!-- zoom box -->
<rect x="555.6" y="509.4" width="34" height="19.4" fill="#fff"/>
<rect x="589.6" y="509.4" width="15.6" height="19.4" fill="#efefef" stroke="#8d8d8d" stroke-width=".8"/>
<path d="M593.6 516.6 L597.4 512.4 L601.2 516.6 M593.6 521.4 L597.4 525.6 L601.2 521.4" stroke="#444" stroke-width="1.2" fill="none"/>
</svg>
<div class="t b" style="left:463.6px;top:509.6px;font-size:8.4px;letter-spacing:-0.25px;text-shadow:0.7px 0 0 #1b2f3e,-0.7px 0 0 #1b2f3e,0 0.7px 0 #1b2f3e,0 -0.7px 0 #1b2f3e,0.5px 0.5px 0 #1b2f3e,-0.5px 0.5px 0 #1b2f3e;color:#fff">100</div>
<div class="t b" style="left:486.4px;top:509.6px;font-size:8.4px;letter-spacing:-0.5px;text-shadow:0.7px 0 0 #1b2f3e,-0.7px 0 0 #1b2f3e,0 0.7px 0 #1b2f3e,0 -0.7px 0 #1b2f3e,0.5px 0.5px 0 #1b2f3e,-0.5px 0.5px 0 #1b2f3e;color:#fff">ALL</div>
<div class="t" style="left:559.8px;top:512.4px;font-size:13.2px;letter-spacing:-1px;color:#3c3c3c">26%</div>
<!--/VIEWERTOOLS-->
<!-- splitter grip horizontal -->
<div class="a" style="left:331px;top:537px;width:15px;height:2px;background:repeating-linear-gradient(90deg,#9a9a9a 0 1px,#fff 1px 2px)"></div>
<!-- lower-left panel -->
<div class="a" style="left:17px;top:540px;width:644px;height:153px;border:1px solid #1b2f3e;background:#fff"></div>
<div class="t" style="left:27.8px;top:552px;font-size:20.3px;letter-spacing:0.42px;color:#161616">Run machine to full X-Axis limits (OQ)</div>
<!--/LEFTPANEL-->
<!--LOWERPANEL-->
<!--RIGHTPANEL-->
<div class="a" style="left:665px;top:121px;width:460px;height:572px;border:1px solid #1b2f3e;background:#fff"></div>
<div class="a" style="left:666px;top:691px;width:450px;height:1px;background:#8c8782"></div>
<div class="a" style="left:666px;top:150px;width:450px;height:1px;background:#5a5f63"></div>
<div class="a" style="left:666px;top:151px;width:1px;height:541px;background:#6c6c6c"></div>
<svg class="a" style="left:673px;top:126px" width="20" height="20" viewBox="0 0 20 20"><circle cx="10" cy="10" r="9" fill="#c3c3c3"/><path d="M4.6 14.6 L14.8 5" stroke="#fff" stroke-width="2.6"/></svg>
<svg class="a" style="left:686px;top:174px" width="7" height="7" viewBox="0 0 7 7"><path d="M6.2 0.4 V6.2 H0.4 Z" fill="#595959"/></svg>
<svg class="a" style="left:701px;top:160.5px" width="31" height="30" viewBox="0 0 31 30">
 <defs><linearGradient id="gw" x1="0" y1="0" x2="1" y2="1"><stop offset="0" stop-color="#f4f7f9"/><stop offset="1" stop-color="#c9d3db"/></linearGradient>
 <linearGradient id="gc" x1="0" y1="0" x2="0" y2="1"><stop offset="0" stop-color="#46dc32"/><stop offset="1" stop-color="#27ae1c"/></linearGradient></defs>
 <path d="M1.6 2.2 L26.6 5.8 L26.6 27 L1.6 20.4 Z" fill="url(#gw)" stroke="#9fb0bd" stroke-width="1"/>
 <path d="M1.6 2.2 L26.6 5.8 L26.6 9.6 L1.6 5.6 Z" fill="#e3ebf1" stroke="#9fb0bd" stroke-width="0.8"/>
 <path d="M18 6.2 l1.6 .25 M20.4 6.6 l1.6 .25 M22.8 7 l1.6 .25" stroke="#4a9ad6" stroke-width="1.3"/>
 <path d="M8.8 9.8 L18.6 23.6 L27 15.7" fill="none" stroke="#1f9416" stroke-width="5" stroke-linejoin="miter"/>
 <path d="M9 10 L18.7 23.1 L26.7 15.7" fill="none" stroke="url(#gc)" stroke-width="3.7" stroke-linejoin="miter"/>
 <path d="M8.4 10 L17.4 22" fill="none" stroke="#8af276" stroke-width="1" opacity=".8"/>
</svg>
<div class="t" style="left:735.5px;top:171.3px;font-size:12px;font-weight:700;letter-spacing:-0.1px;color:#1a1a1a">IQ</div>
<div class="a" style="left:667px;top:202px;width:449px;height:1px;background:#d4d4d4"></div>
<svg class="a" style="left:703.5px;top:218.5px" width="19" height="23" viewBox="0 0 19 23">
 <path d="M1.4 1.4 L12.8 1.2 L12.8 21.6 L1.4 20.4 Z" fill="#f3f5f7" stroke="#909ca6" stroke-width="0.9"/>
 <path d="M1.6 1.6 L12.6 1.4 L12.6 4.6 L1.6 4.6 Z" fill="#2cb0ea"/>
 <path d="M3.6 6 V19.8 M1.8 13.2 H6" stroke="#c5ccd2" stroke-width="0.8"/>
 <rect x="7.2" y="8.8" width="9.6" height="12.2" fill="#2aaae6" stroke="#2593cc" stroke-width="0.5"/>
 <rect x="8.6" y="10.4" width="1.6" height="2" fill="#f59a90"/><rect x="8.6" y="13.8" width="1.6" height="2" fill="#e9f5fc"/><rect x="8.6" y="17" width="1.6" height="2" fill="#e9f5fc"/>
 <path d="M11.4 11.4 h3.6 M11.4 14.8 h3.6 M11.4 18 h3.6" stroke="#1a7fbc" stroke-width="0.9"/>
</svg>
<div class="t b" style="left:728.2px;top:225px;font-size:12px;-webkit-text-stroke:0.22px #2b2b2b;letter-spacing:0.354px;color:#2b2b2b">Input Date and Time (IQ)</div>
<svg class="a" style="left:703.5px;top:272.5px" width="19" height="23" viewBox="0 0 19 23">
 <path d="M1.4 1.4 L12.8 1.2 L12.8 21.6 L1.4 20.4 Z" fill="#f3f5f7" stroke="#909ca6" stroke-width="0.9"/>
 <path d="M1.6 1.6 L12.6 1.4 L12.6 4.6 L1.6 4.6 Z" fill="#2cb0ea"/>
 <path d="M3.6 6 V19.8 M1.8 13.2 H6" stroke="#c5ccd2" stroke-width="0.8"/>
 <rect x="7.2" y="8.8" width="9.6" height="12.2" fill="#2aaae6" stroke="#2593cc" stroke-width="0.5"/>
 <rect x="8.6" y="10.4" width="1.6" height="2" fill="#f59a90"/><rect x="8.6" y="13.8" width="1.6" height="2" fill="#e9f5fc"/><rect x="8.6" y="17" width="1.6" height="2" fill="#e9f5fc"/>
 <path d="M11.4 11.4 h3.6 M11.4 14.8 h3.6 M11.4 18 h3.6" stroke="#1a7fbc" stroke-width="0.9"/>
</svg>
<div class="t b" style="left:728.2px;top:279px;font-size:12px;-webkit-text-stroke:0.22px #2b2b2b;letter-spacing:0.300px;color:#2b2b2b">Input Machine Serial Number (IQ)</div>
<svg class="a" style="left:703.5px;top:326.5px" width="19" height="23" viewBox="0 0 19 23">
 <path d="M1.4 1.4 L12.8 1.2 L12.8 21.6 L1.4 20.4 Z" fill="#f3f5f7" stroke="#909ca6" stroke-width="0.9"/>
 <path d="M1.6 1.6 L12.6 1.4 L12.6 4.6 L1.6 4.6 Z" fill="#2cb0ea"/>
 <path d="M3.6 6 V19.8 M1.8 13.2 H6" stroke="#c5ccd2" stroke-width="0.8"/>
 <rect x="7.2" y="8.8" width="9.6" height="12.2" fill="#2aaae6" stroke="#2593cc" stroke-width="0.5"/>
 <rect x="8.6" y="10.4" width="1.6" height="2" fill="#f59a90"/><rect x="8.6" y="13.8" width="1.6" height="2" fill="#e9f5fc"/><rect x="8.6" y="17" width="1.6" height="2" fill="#e9f5fc"/>
 <path d="M11.4 11.4 h3.6 M11.4 14.8 h3.6 M11.4 18 h3.6" stroke="#1a7fbc" stroke-width="0.9"/>
</svg>
<div class="t b" style="left:728.2px;top:333px;font-size:12px;-webkit-text-stroke:0.22px #2b2b2b;letter-spacing:0.385px;color:#2b2b2b">Input Machine Voltage (IQ)</div>
<svg class="a" style="left:703.5px;top:380.5px" width="19" height="23" viewBox="0 0 19 23">
 <path d="M1.4 1.4 L12.8 1.2 L12.8 21.6 L1.4 20.4 Z" fill="#f3f5f7" stroke="#909ca6" stroke-width="0.9"/>
 <path d="M1.6 1.6 L12.6 1.4 L12.6 4.6 L1.6 4.6 Z" fill="#2cb0ea"/>
 <path d="M3.6 6 V19.8 M1.8 13.2 H6" stroke="#c5ccd2" stroke-width="0.8"/>
 <rect x="7.2" y="8.8" width="9.6" height="12.2" fill="#2aaae6" stroke="#2593cc" stroke-width="0.5"/>
 <rect x="8.6" y="10.4" width="1.6" height="2" fill="#f59a90"/><rect x="8.6" y="13.8" width="1.6" height="2" fill="#e9f5fc"/><rect x="8.6" y="17" width="1.6" height="2" fill="#e9f5fc"/>
 <path d="M11.4 11.4 h3.6 M11.4 14.8 h3.6 M11.4 18 h3.6" stroke="#1a7fbc" stroke-width="0.9"/>
</svg>
<div class="t b" style="left:728.2px;top:387px;font-size:12px;-webkit-text-stroke:0.22px #2b2b2b;letter-spacing:0.072px;color:#2b2b2b">Are Safety Guards in Place? (IQ)</div>
<div class="a" style="left:667px;top:419px;width:449px;height:1px;background:#d4d4d4"></div>
<svg class="a" style="left:686px;top:442.5px" width="7" height="7" viewBox="0 0 7 7"><path d="M6.2 0.4 V6.2 H0.4 Z" fill="#595959"/></svg>
<svg class="a" style="left:701px;top:429.5px" width="31" height="30" viewBox="0 0 31 30">
 <defs><linearGradient id="gw" x1="0" y1="0" x2="1" y2="1"><stop offset="0" stop-color="#f4f7f9"/><stop offset="1" stop-color="#c9d3db"/></linearGradient>
 <linearGradient id="gc" x1="0" y1="0" x2="0" y2="1"><stop offset="0" stop-color="#46dc32"/><stop offset="1" stop-color="#27ae1c"/></linearGradient></defs>
 <path d="M1.6 2.2 L26.6 5.8 L26.6 27 L1.6 20.4 Z" fill="url(#gw)" stroke="#9fb0bd" stroke-width="1"/>
 <path d="M1.6 2.2 L26.6 5.8 L26.6 9.6 L1.6 5.6 Z" fill="#e3ebf1" stroke="#9fb0bd" stroke-width="0.8"/>
 <path d="M18 6.2 l1.6 .25 M20.4 6.6 l1.6 .25 M22.8 7 l1.6 .25" stroke="#4a9ad6" stroke-width="1.3"/>
 <path d="M8.8 9.8 L18.6 23.6 L27 15.7" fill="none" stroke="#1f9416" stroke-width="5" stroke-linejoin="miter"/>
 <path d="M9 10 L18.7 23.1 L26.7 15.7" fill="none" stroke="url(#gc)" stroke-width="3.7" stroke-linejoin="miter"/>
 <path d="M8.4 10 L17.4 22" fill="none" stroke="#8af276" stroke-width="1" opacity=".8"/>
</svg>
<div class="t" style="left:735.3px;top:440px;font-size:12px;font-weight:700;letter-spacing:-0.1px;color:#1a1a1a">OQ</div>
<div class="a" style="left:667px;top:471px;width:449px;height:1px;background:#d4d4d4"></div>
<div class="a" style="left:695px;top:526px;width:421px;height:54px;background:#b3d6ee"></div>
<div class="a" style="left:667px;top:580px;width:449px;height:1px;background:#d4d4d4"></div>
<svg class="a" style="left:703.5px;top:487.5px" width="19" height="23" viewBox="0 0 19 23">
 <path d="M1.4 1.4 L12.8 1.2 L12.8 21.6 L1.4 20.4 Z" fill="#f3f5f7" stroke="#909ca6" stroke-width="0.9"/>
 <path d="M1.6 1.6 L12.6 1.4 L12.6 4.6 L1.6 4.6 Z" fill="#2cb0ea"/>
 <path d="M3.6 6 V19.8 M1.8 13.2 H6" stroke="#c5ccd2" stroke-width="0.8"/>
 <rect x="7.2" y="8.8" width="9.6" height="12.2" fill="#2aaae6" stroke="#2593cc" stroke-width="0.5"/>
 <rect x="8.6" y="10.4" width="1.6" height="2" fill="#f59a90"/><rect x="8.6" y="13.8" width="1.6" height="2" fill="#e9f5fc"/><rect x="8.6" y="17" width="1.6" height="2" fill="#e9f5fc"/>
 <path d="M11.4 11.4 h3.6 M11.4 14.8 h3.6 M11.4 18 h3.6" stroke="#1a7fbc" stroke-width="0.9"/>
</svg>
<div class="t b" style="left:728.2px;top:494px;font-size:12px;-webkit-text-stroke:0.22px #2b2b2b;letter-spacing:0.245px;color:#2b2b2b">Initiate self test procedure (OQ)</div>
<svg class="a" style="left:703.5px;top:541.5px" width="19" height="23" viewBox="0 0 19 23">
 <path d="M1.4 1.4 L12.8 1.2 L12.8 21.6 L1.4 20.4 Z" fill="#f3f5f7" stroke="#909ca6" stroke-width="0.9"/>
 <path d="M1.6 1.6 L12.6 1.4 L12.6 4.6 L1.6 4.6 Z" fill="#2cb0ea"/>
 <path d="M3.6 6 V19.8 M1.8 13.2 H6" stroke="#c5ccd2" stroke-width="0.8"/>
 <rect x="7.2" y="8.8" width="9.6" height="12.2" fill="#2aaae6" stroke="#2593cc" stroke-width="0.5"/>
 <rect x="8.6" y="10.4" width="1.6" height="2" fill="#f59a90"/><rect x="8.6" y="13.8" width="1.6" height="2" fill="#e9f5fc"/><rect x="8.6" y="17" width="1.6" height="2" fill="#e9f5fc"/>
 <path d="M11.4 11.4 h3.6 M11.4 14.8 h3.6 M11.4 18 h3.6" stroke="#1a7fbc" stroke-width="0.9"/>
</svg>
<div class="t b" style="left:728.2px;top:548px;font-size:12px;-webkit-text-stroke:0.22px #2b2b2b;letter-spacing:0.218px;color:#2b2b2b">Run machine to full X-Axis limits (OQ)</div>
<div class="a" style="left:662px;top:399px;width:2px;height:16px;background:repeating-linear-gradient(#868686 0 1px,#fff 1px 2px)"></div>
<!--/RIGHTPANEL-->
<!--SCROLLBAR-->
<div class="a" style="left:6px;top:706px;width:1108px;height:16px;background:#f0f0f0"></div>
<div class="a" style="left:22px;top:706px;width:1031px;height:16px;background:#c1c1c1"></div>
<svg class="a" style="left:10px;top:710px" width="8" height="9" viewBox="0 0 8 9"><path d="M6.6 0.8 L1.6 4.5 L6.6 8.2" stroke="#5f5f5f" stroke-width="1.5" fill="none"/></svg>
<svg class="a" style="left:1103px;top:710px" width="8" height="9" viewBox="0 0 8 9"><path d="M1.4 0.8 L6.4 4.5 L1.4 8.2" stroke="#5f5f5f" stroke-width="1.5" fill="none"/></svg>
<div class="a navy" style="left:1115px;top:0;width:5px;height:727px"></div>
<div class="a navy" style="left:0;top:722px;width:1120px;height:5px"></div>
<!--/SCROLLBAR-->
</div>
</body></html>
